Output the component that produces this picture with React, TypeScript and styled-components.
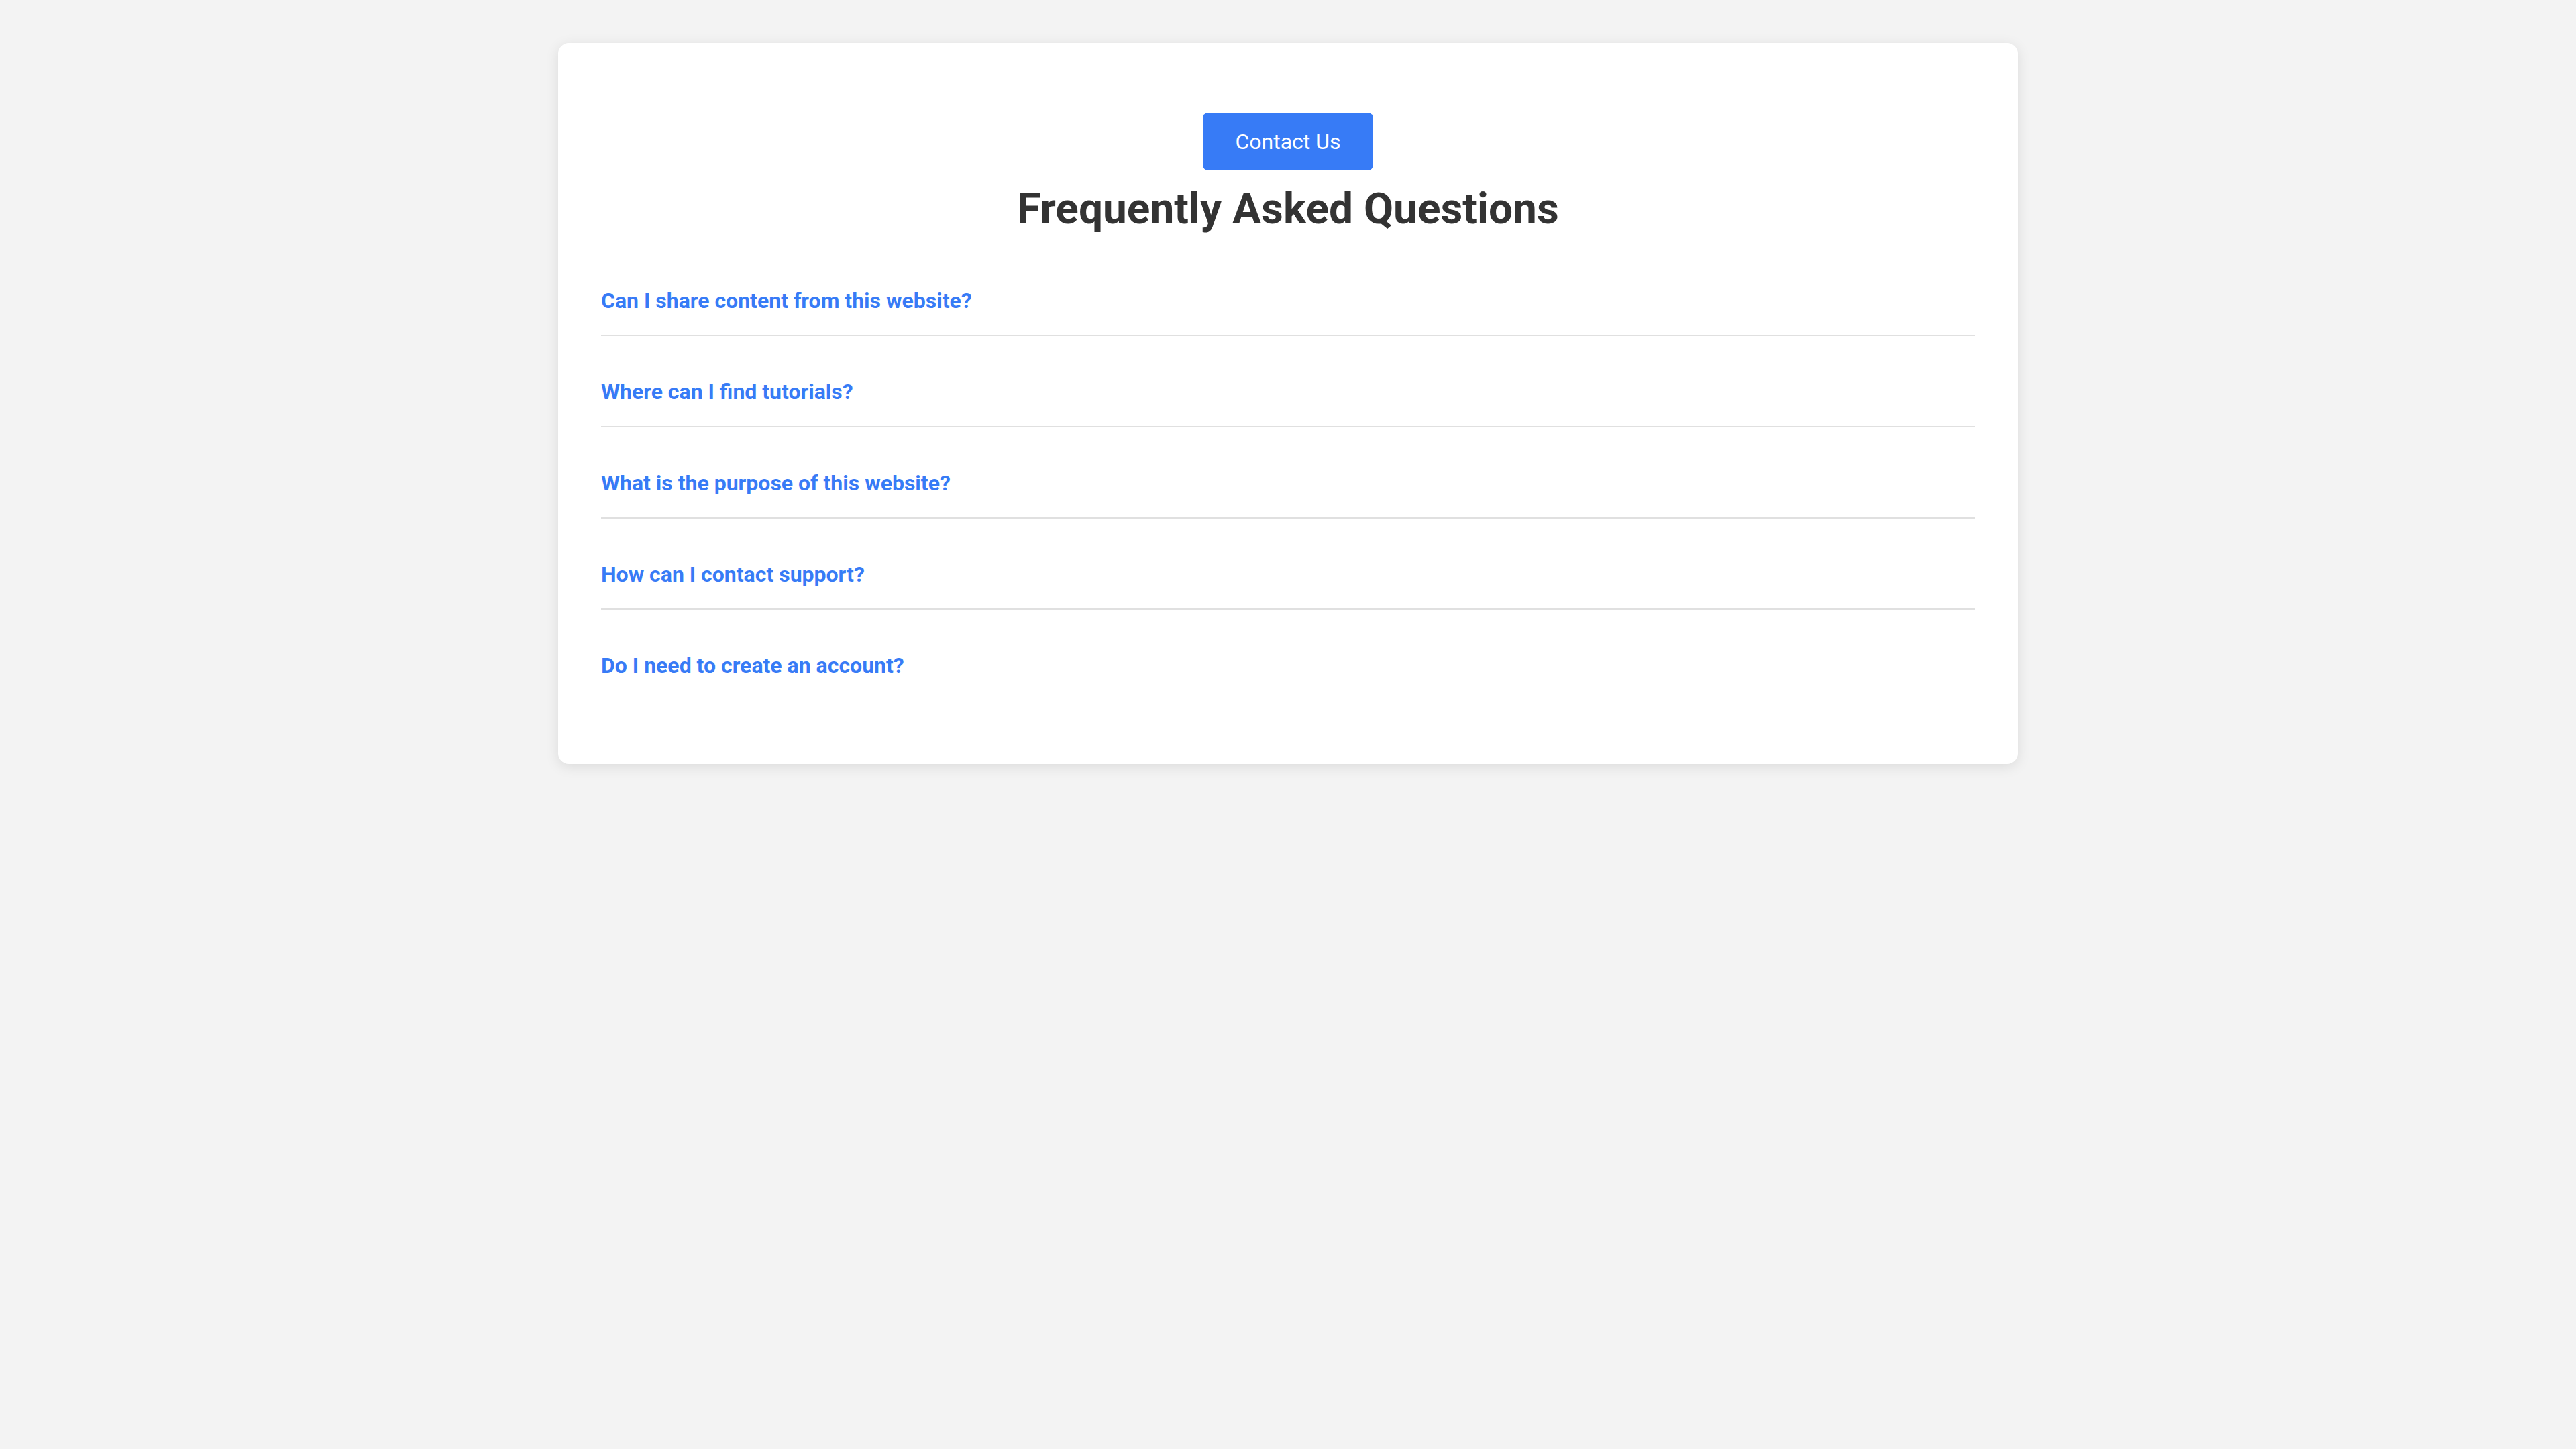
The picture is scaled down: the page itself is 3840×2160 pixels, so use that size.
import React from "react";
import styled, { createGlobalStyle } from "styled-components";

const GlobalStyle = createGlobalStyle`
  html, body {
    margin: 0;
    padding: 0;
    background: #f3f3f3;
    font-family: Roboto, "Liberation Sans", Arial, sans-serif;
  }
  * { box-sizing: border-box; }
`;

const Page = styled.div`
  min-height: 2160px;
  padding: 64px 0;
  display: flex;
  justify-content: center;
  align-items: flex-start;
`;

const Card = styled.section`
  width: 2176px;
  background: #ffffff;
  border-radius: 16px;
  box-shadow: 0 4px 20px rgba(0, 0, 0, 0.1);
  padding: 64px;
  display: flex;
  flex-direction: column;
`;

const Header = styled.header`
  display: flex;
  flex-direction: column;
  align-items: center;
  padding-top: 40px;
  gap: 20px;
  margin-bottom: 48px;
`;

const ContactButton = styled.button`
  background: #377bf6;
  color: #ffffff;
  border: none;
  border-radius: 8px;
  padding: 24px 48px;
  font-family: Roboto, "Liberation Sans", Arial, sans-serif;
  font-size: 32px;
  line-height: normal;
  cursor: pointer;
`;

const Title = styled.h1`
  margin: 0;
  font-size: 64px;
  font-weight: 700;
  line-height: normal;
  color: #333333;
`;

const List = styled.div`
  display: flex;
  flex-direction: column;
`;

const Item = styled.div<{ $last?: boolean }>`
  padding: 32px 0;
  margin-bottom: 32px;
  border-bottom: ${(p) => (p.$last ? "none" : "2px solid #e0e0e0")};
`;

const Question = styled.div`
  font-size: 32px;
  font-weight: 700;
  line-height: normal;
  color: #377bf6;
  cursor: pointer;
`;

const questions = [
  "Can I share content from this website?",
  "Where can I find tutorials?",
  "What is the purpose of this website?",
  "How can I contact support?",
  "Do I need to create an account?",
];

export default function App() {
  return (
    <>
      <GlobalStyle />
      <Page>
        <Card>
          <Header>
            <ContactButton>Contact Us</ContactButton>
            <Title>Frequently Asked Questions</Title>
          </Header>
          <List>
            {questions.map((q, i) => (
              <Item key={q} $last={i === questions.length - 1}>
                <Question>{q}</Question>
              </Item>
            ))}
          </List>
        </Card>
      </Page>
    </>
  );
}
